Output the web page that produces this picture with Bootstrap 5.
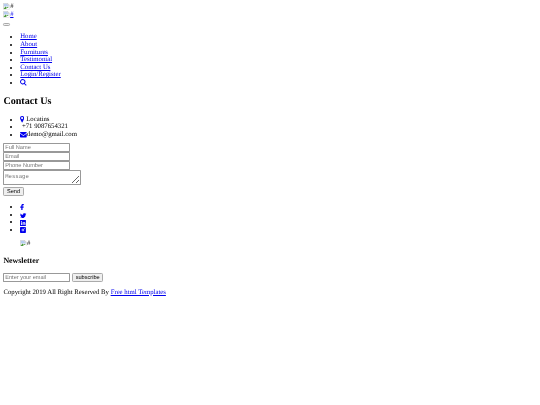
<!DOCTYPE html>
<html lang="en"><head><meta charset="utf-8"><title>Contact</title>
<link rel="stylesheet" href="https://cdn.jsdelivr.net/npm/bootstrap@5.3.0/dist/css/bootstrap.min.css">
<style>
html,body{margin:0;padding:0;background:#fff}
.shot-page{zoom:.421875;width:1280px;padding:8px;font-family:"Liberation Serif",serif;font-size:16px;line-height:18px;color:#000;background:#fff;filter:blur(.4px);text-rendering:geometricPrecision}
a{color:#00e;text-decoration:underline}
button,input,textarea{all:revert}
input,button{font-family:"Liberation Sans",sans-serif;font-size:13.33px;text-rendering:geometricPrecision}
input{width:159px;height:21.33px;box-sizing:border-box;border:2px solid #999;padding:4px 2px 0;border-radius:2px}
input::placeholder,textarea::placeholder{color:#757575;opacity:1}
textarea{font-family:"Liberation Mono",monospace;font-size:13.33px;width:183px;height:36px;box-sizing:border-box;border:2px solid #999;border-radius:2px;padding:4px 2px 0;text-rendering:geometricPrecision}
button{height:21px;padding:3px 6px 0;background:#efefef;border:2px solid #aaa;border-radius:3px;color:#000}
.shot-field{display:block}
.shot-line{display:block;height:18px;white-space:nowrap}
.shot-line svg,.shot-ind svg{display:inline-block;vertical-align:top}
.shot-togline{height:16px;padding-top:10px;box-sizing:border-box}
.shot-togline button{display:block;width:16px;height:8px;margin:0;padding:0}
.shot-list{list-style:disc;padding-left:40px;margin:19px 0 0}
.shot-list-mid{margin:0 0 11px}
.shot-list-soc{margin:18px 0 14px}
.shot-h2{font-family:"Liberation Serif",serif;font-weight:700;font-size:24px;line-height:27px;margin:21.5px 0 20.5px}
.shot-h3{font-family:"Liberation Serif",serif;font-weight:700;font-size:18.72px;line-height:21px;margin:22.5px 0 17.5px}
.shot-form{margin:0}
.shot-send{display:block;margin-top:4px}
.shot-p{margin:16.5px 0}
.shot-ind{margin-left:40px;height:18px;white-space:nowrap}
.shot-ico{display:inline-block;vertical-align:-2px;margin:-3px 0;fill:currentColor}
</style></head><body>
<div class="shot-page">
<svg width="0" height="0" class="d-none"><defs><symbol id="brk" viewBox="0 0 16 16"><path d="M1 1h10l4 4v10H1z" fill="#fff" stroke="#a8a8a8"/><path d="M11 1v4h4" fill="#e8e8e8" stroke="#a8a8a8"/><path d="M2 2h8v3l4 1v2H2z" fill="#b7cdf0"/><path d="M2 13l4-5 3 3 2-2 3 3v2H2z" fill="#4e9a3c"/><path d="M7 15l2-4 3 1 3-3v6z" fill="#fff"/></symbol></defs></svg>
<div class="shot-line"><svg width="16" height="16"><use href="#brk"/></svg>#</div>
<a href="#" class="shot-line"><svg width="16" height="16"><use href="#brk"/></svg>#</a>
<div class="shot-togline"><button type="button" aria-label="Menu"></button></div>
<ul class="shot-list">
<li><a href="#">Home</a></li><li><a href="#">About</a></li><li><a href="#">Furnitures</a></li><li><a href="#">Testimonial</a></li><li><a href="#">Contact Us</a></li><li><a href="#">Login/Register</a></li>
<li><a href="#"><svg class="shot-ico" width="16" height="16" viewBox="0 0 16 16"><path d="M6.500 0a6.500 6.500 0 0 1 5.200 10.400l4 4-1.600 1.600-4-4A6.500 6.500 0 1 1 6.500 0zm0 2.300a4.200 4.200 0 1 0 0 8.400 4.200 4.200 0 0 0 0-8.400z"/></svg></a></li>
</ul>
<h2 class="shot-h2">Contact Us</h2>
<ul class="shot-list shot-list-mid">
<li><a href="#"><svg class="shot-ico" width="10" height="16" viewBox="0 0 10 16"><path fill-rule="evenodd" d="M5 0a5 5 0 0 1 5 5c0 3-5 11-5 11S0 8 0 5a5 5 0 0 1 5-5zm0 2.500a2.500 2.500 0 1 0 0 5 2.500 2.500 0 0 0 0-5z"/></svg></a> Locatins</li>
<li>&nbsp;+71 9087654321</li>
<li><a href="#"><svg class="shot-ico" width="16" height="13" viewBox="0 0 16 13"><path d="M0 1.500C0 .7.700 0 1.500 0h13c.8 0 1.500.7 1.500 1.500L8 7.500zM0 3.500l8 6 8-6v8c0 .8-.7 1.500-1.500 1.500h-13C.7 13 0 12.300 0 11.500z"/></svg></a>demo@gmail.com</li>
</ul>
<form class="shot-form">
<input class="shot-field" placeholder="Full Name"><input class="shot-field" placeholder="Email"><input class="shot-field" placeholder="Phone Number"><textarea class="shot-field" rows="2" cols="20" placeholder="Message"></textarea>
<button class="shot-send" type="button">Send</button>
</form>
<ul class="shot-list shot-list-soc">
<li><a href="#"><svg class="shot-ico" width="9" height="16" viewBox="0 0 9 16"><path d="M6 16V9h2.400l.5-3H6V4.200C6 3.300 6.300 2.800 7.400 2.800H9V.1C8.700.1 7.800 0 6.800 0 4.600 0 3 1.300 3 3.900V6H.5v3H3v7z"/></svg></a></li>
<li><a href="#"><svg class="shot-ico" width="15" height="13" viewBox="0 0 16 13"><path d="M16 1.500c-.6.300-1.200.4-1.900.5.700-.4 1.200-1 1.400-1.800-.6.400-1.300.6-2.100.8A3.300 3.300 0 0 0 7.800 4C5.100 3.900 2.700 2.600 1.100.6.200 2.100.7 4 2.100 5c-.5 0-1-.2-1.500-.4 0 1.600 1.100 2.900 2.600 3.200-.5.100-1 .2-1.500.1.400 1.300 1.600 2.200 3.100 2.300A6.600 6.600 0 0 1 0 11.500 9.300 9.300 0 0 0 14.300 3.200c.7-.4 1.300-1 1.700-1.700z"/></svg></a></li>
<li><a href="#"><svg class="shot-ico" width="14" height="14" viewBox="0 0 16 16"><path fill-rule="evenodd" d="M1 0h14a1 1 0 0 1 1 1v14a1 1 0 0 1-1 1H1a1 1 0 0 1-1-1V1a1 1 0 0 1 1-1zm1.500 6v7.500H5V6zm1.200-3.500a1.400 1.400 0 1 0 0 2.800 1.400 1.400 0 0 0 0-2.800zM7 6v7.500h2.500V9.500c0-2 2.500-2 2.500 0v4h2.500V9C14.500 5.500 10.800 5.500 9.500 7V6z"/></svg></a></li>
<li><a href="#"><svg class="shot-ico" width="14" height="14" viewBox="0 0 16 16"><path fill-rule="evenodd" d="M2 0h12a2 2 0 0 1 2 2v12a2 2 0 0 1-2 2H2a2 2 0 0 1-2-2V2a2 2 0 0 1 2-2zm6 4.500a3.500 3.500 0 1 0 0 7 3.500 3.500 0 0 0 0-7zm0 1.600a1.900 1.900 0 1 1 0 3.800 1.900 1.900 0 0 1 0-3.800zM12.500 2a1.300 1.300 0 1 0 0 2.600 1.300 1.300 0 0 0 0-2.600z"/></svg></a></li>
</ul>
<div class="shot-ind"><svg width="16" height="16"><use href="#brk"/></svg>#</div>
<h3 class="shot-h3">Newsletter</h3>
<form class="shot-form">
<input placeholder="Enter your email"> <button type="button">subscribe</button>
</form>
<p class="shot-p">Copyright 2019 All Right Reserved By <a href="#">Free html Templates</a></p>
</div>
<script src="https://cdn.jsdelivr.net/npm/bootstrap@5.3.0/dist/js/bootstrap.bundle.min.js"></script>
</body></html>
